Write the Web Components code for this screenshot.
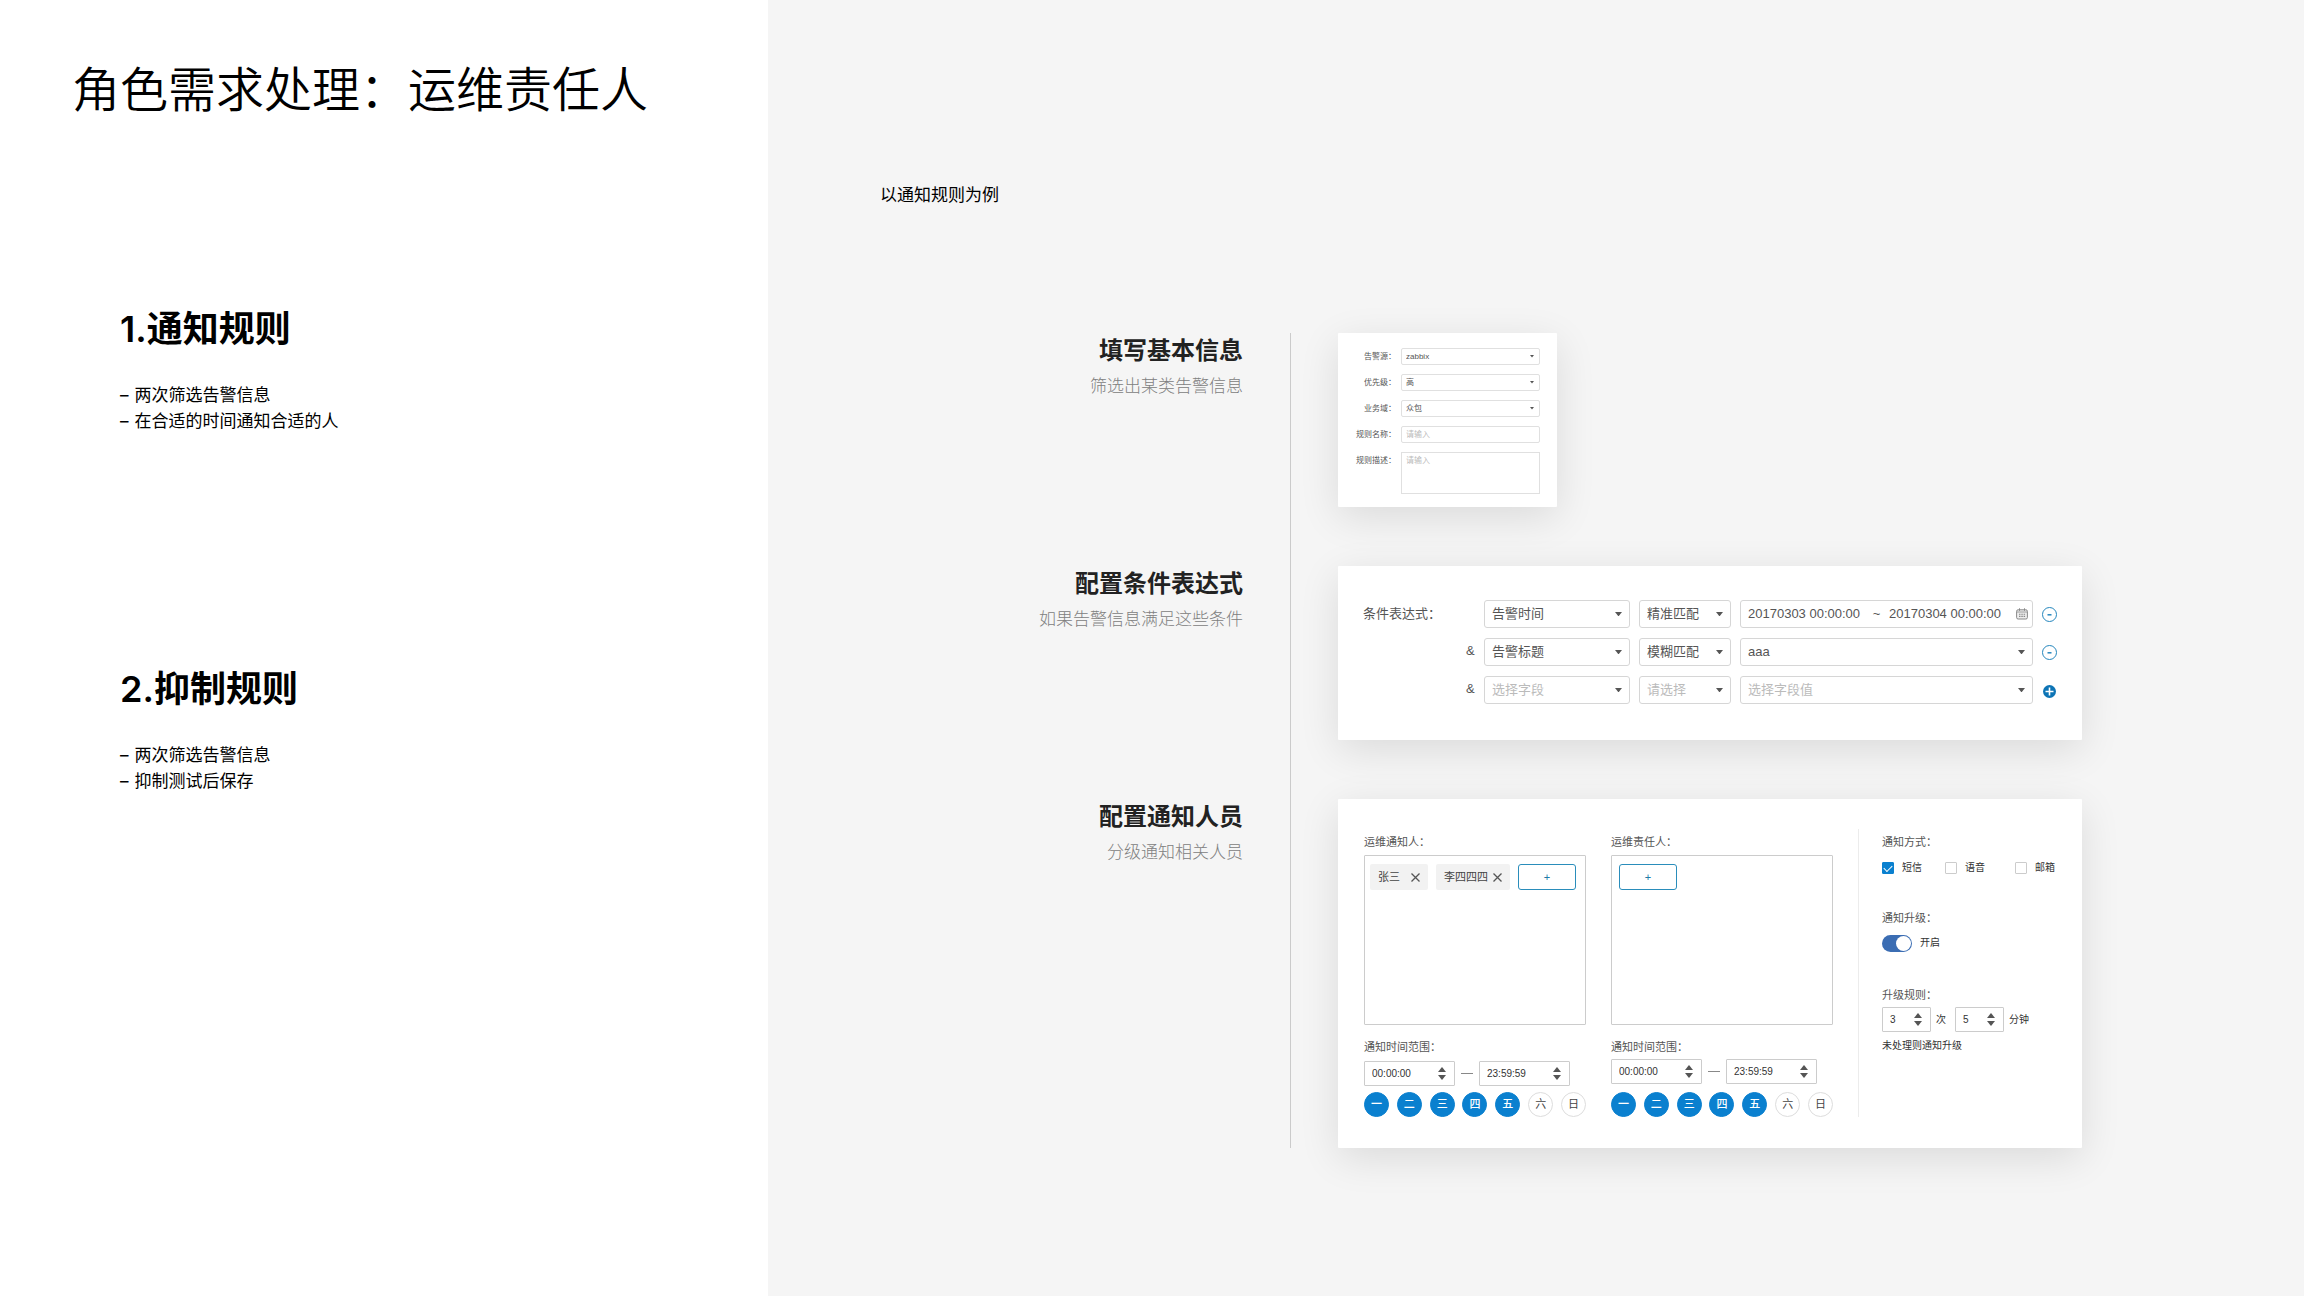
<!DOCTYPE html>
<html lang="zh-CN">
<head>
<meta charset="utf-8">
<title>角色需求处理：运维责任人</title>
<style>
  html, body { margin: 0; }
  body {
    display: grid;
    grid-template-columns: minmax(0, 1fr) minmax(0, 2fr);
    min-height: 100vh;
    background: #f5f5f5;
    color: #000;
    font-family: Inter, "Noto Sans CJK SC", sans-serif;
    --ui-font: "Liberation Sans", "Noto Sans CJK SC", sans-serif;
    --blue: #0a80cf;
  }
</style>
</head>
<body>
<brief-panel>
  <span slot="title">角色需求处理：运维责任人</span>
  <rule-summary heading="1.通知规则" points="两次筛选告警信息|在合适的时间通知合适的人"></rule-summary>
  <rule-summary heading="2.抑制规则" points="两次筛选告警信息|抑制测试后保存"></rule-summary>
</brief-panel>
<demo-panel>
  <span slot="caption">以通知规则为例</span>
  <flow-step heading="填写基本信息" note="筛选出某类告警信息">
    <basic-form></basic-form>
  </flow-step>
  <flow-step heading="配置条件表达式" note="如果告警信息满足这些条件">
    <condition-form></condition-form>
  </flow-step>
  <flow-step heading="配置通知人员" note="分级通知相关人员">
    <people-form></people-form>
  </flow-step>
</demo-panel>

<script>
const base = `:host, *, ::before { box-sizing: border-box; } input, select, textarea, button { font: inherit; color: inherit; margin: 0; padding: 0; border: 0; background: none; border-radius: 0; outline-offset: 1px; }`;

function define(name, render, wire) {
  customElements.define(name, class extends HTMLElement {
    connectedCallback() {
      if (this.shadowRoot) return;
      const root = this.attachShadow({ mode: "open" });
      const tpl = document.createElement("template");
      const attr = (key, fallback = "") => this.getAttribute(key) ?? fallback;
      tpl.innerHTML = `<style>${base}</style>` + render(attr, this);
      root.append(tpl.content.cloneNode(true));
      if (wire) wire(root, this);
    }
  });
}

const caret = `<svg viewBox="0 0 8 5" aria-hidden="true"><path d="M0 0h8L4 5z" fill="currentColor"/></svg>`;

/* Left column: page title and rule summaries */
define("brief-panel", () => `
  <style>
    :host { display: block; background: #fff; padding: 54px 24px 48px 72px; }
    h1 { margin: 0 0 187px; font: 350 48px/64px "Noto Sans CJK SC", sans-serif; }
    .rules { display: flex; flex-direction: column; gap: 231px; padding-left: 48px; }
  </style>
  <h1><slot name="title"></slot></h1>
  <div class="rules"><slot></slot></div>`);

define("rule-summary", attr => `
  <style>
    :host { display: block; }
    h2 { margin: 0 0 29px; font-size: 36px; line-height: 48px; font-weight: 600; }
    ul { margin: 0; padding: 0; list-style: none; font-size: 17px; line-height: 26px; }
    li { display: flex; gap: 6px; }
  </style>
  <h2>${attr("heading")}</h2>
  <ul>${attr("points").split("|").map(p => `<li><span>–</span><span>${p}</span></li>`).join("")}</ul>`);

/* Right column: caption and the step-by-step flow */
define("demo-panel", () => `
  <style>
    :host { display: block; padding: 182px 222px 48px 0; }
    p { margin: 0 0 125px 112px; font-size: 17px; line-height: 26px; }
    .flow { display: grid; grid-template-columns: minmax(0, 1fr) 1px 744px; column-gap: 47px; row-gap: 59px; }
    .line { grid-column: 2; grid-row: 1 / span 3; background: #cbcbcb; }
  </style>
  <p><slot name="caption"></slot></p>
  <div class="flow"><div class="line"></div><slot></slot></div>`);

define("flow-step", attr => `
  <style>
    :host { display: contents; }
    header { grid-column: 1; text-align: right; }
    h3 { margin: 0; font-size: 24px; line-height: 36px; font-weight: 600; color: #222; }
    p { margin: 4px 0 0; font-size: 17px; line-height: 26px; font-weight: 300; color: #808080; }
    .card { grid-column: 3; justify-self: start; max-width: 100%; background: #fff; border-radius: 1px; box-shadow: 0 10px 40px rgba(0,0,0,.11); font-family: var(--ui-font); color: #555; }
    .card.full { width: 100%; }
  </style>
  <header><h3>${attr("heading")}</h3><p>${attr("note")}</p></header>
  <div class="card"><slot></slot></div>`,
  (root, host) => {
    if (!host.querySelector("basic-form")) root.querySelector(".card").classList.add("full");
  });

/* Label and control on one row of the small form */
define("form-row", attr => {
  const kind = attr("kind"), value = attr("value");
  const control = kind === "select"
    ? `<span class="pick"><select id="c"><option>${value}</option></select>${caret}</span>`
    : kind === "area" ? `<textarea id="c" placeholder="${value}"></textarea>`
    : `<input id="c" type="text" placeholder="${value}">`;
  return `
  <style>
    :host { display: grid; grid-template-columns: 40px 139px; column-gap: 5px; font-size: 8px; line-height: 17px; }
    label { text-align: right; }
    .pick { display: grid; align-items: center; }
    .pick > * { grid-area: 1 / 1; }
    select, input, textarea { width: 100%; height: 17px; line-height: 15px; padding: 0 4px; border: 1px solid #e0e0e0; border-radius: 2px; appearance: none; display: block; }
    textarea { height: 42px; line-height: 16px; border-radius: 0; resize: none; }
    ::placeholder { color: #bbb; opacity: 1; }
    svg { width: 4px; justify-self: end; margin-right: 6px; pointer-events: none; }
  </style>
  <label for="c">${attr("label")}：</label>${control}`;
});

define("basic-form", () => `
  <style>
    :host { display: flex; flex-direction: column; gap: 9px; padding: 15px 17px 13px 18px; }
  </style>
  <form-row kind="select" label="告警源" value="zabbix"></form-row>
  <form-row kind="select" label="优先级" value="高"></form-row>
  <form-row kind="select" label="业务域" value="众包"></form-row>
  <form-row kind="text" label="规则名称" value="请输入"></form-row>
  <form-row kind="area" label="规则描述" value="请输入"></form-row>`);

define("drop-down", (attr, host) => `
  <style>
    :host { display: grid; align-items: center; font-size: 13px; }
    select, svg { grid-area: 1 / 1; }
    select { width: 100%; height: 28px; line-height: 26px; padding: 0 7px; border: 1px solid #d6d6d6; border-radius: 3px; appearance: none; color: ${host.hasAttribute("empty") ? "#bbb" : "#555"}; }
    svg { width: 7px; justify-self: end; margin-right: 8px; pointer-events: none; }
  </style>
  <select aria-label="${attr("label")}"><option>${attr("value")}</option></select>${caret}`);

define("date-range", attr => `
  <style>
    :host { display: flex; align-items: center; height: 28px; padding: 0 4px 0 7px; border: 1px solid #d6d6d6; border-radius: 3px; font-size: 13px; line-height: 26px; }
    input { width: 116px; }
    span { width: 25px; text-align: center; }
    button { display: flex; margin-left: auto; color: #888; }
    svg { width: 12px; height: 12px; }
  </style>
  <input type="text" aria-label="开始时间" value="${attr("from")}"><span>~</span>
  <input type="text" aria-label="结束时间" value="${attr("to")}">
  <button type="button" aria-label="日历"><svg viewBox="0 0 12 12" fill="none" stroke="currentColor"><rect x=".6" y="1.8" width="10.8" height="9.2" rx="1.5" fill="#eee"/><path d="M3.5 .3v2.5M8.5 .3v2.5"/><path d="M1 4h10" stroke-width=".8"/><path d="M3 6.2h1.5M5.3 6.2h1.5M7.6 6.2h1.5M3 8.4h1.5M5.3 8.4h1.5M7.6 8.4h1.5" stroke-width="1.1"/></svg></button>`);

const removeIcon = `<svg viewBox="0 0 15 15" fill="none" stroke="#2586bd"><circle cx="7.5" cy="7.5" r="7"/><path d="M5.5 7.8h4" stroke-width="1.5"/></svg>`;

define("condition-form", () => `
  <style>
    :host { display: grid; grid-template-columns: 94px 9px 146px 92px minmax(0, 1fr) 15px; column-gap: 9px; row-gap: 10px; align-items: center; padding: 34px 25px 36px; font-size: 13px; line-height: 28px; }
    .name { grid-column: 1 / span 2; }
    .and { grid-column: 2; line-height: 26px; align-self: start; }
    button { display: flex; align-items: center; height: 28px; }
    svg { width: 15px; height: 15px; }
  </style>
  <span class="name">条件表达式：</span>
  <drop-down label="字段" value="告警时间"></drop-down>
  <drop-down label="匹配方式" value="精准匹配"></drop-down>
  <date-range from="20170303 00:00:00" to="20170304 00:00:00"></date-range>
  <button type="button" aria-label="删除">${removeIcon}</button>
  <span class="and">&amp;</span>
  <drop-down label="字段" value="告警标题"></drop-down>
  <drop-down label="匹配方式" value="模糊匹配"></drop-down>
  <drop-down label="字段值" value="aaa"></drop-down>
  <button type="button" aria-label="删除">${removeIcon}</button>
  <span class="and">&amp;</span>
  <drop-down empty label="字段" value="选择字段"></drop-down>
  <drop-down empty label="匹配方式" value="请选择"></drop-down>
  <drop-down empty label="字段值" value="选择字段值"></drop-down>
  <button type="button" aria-label="添加"><svg viewBox="0 0 15 15"><circle cx="7.5" cy="8.5" r="6.5" fill="#0d74b5"/><path d="M7.5 4.5v8M3.5 8.5h8" stroke="#fff" stroke-width="1.6"/></svg></button>`);

/* Number or time box with its up and down arrows */
define("step-input", attr => `
  <style>
    :host { display: flex; align-items: center; width: 91px; height: 25px; padding: 0 8px 0 7px; border: 1px solid #ccc; border-radius: 1px; font-size: 10px; line-height: 23px; color: #333; }
    :host([small]) { width: 49px; }
    input { flex: 1; min-width: 0; width: 0; }
    .arrows { display: flex; flex-direction: column; gap: 3px; color: #555; }
    button { display: flex; }
    svg { width: 8px; height: 5px; }
    button:first-child svg { transform: rotate(180deg); }
  </style>
  <input type="text" aria-label="${attr("label")}" value="${attr("value")}">
  <span class="arrows"><button type="button" aria-label="增加">${caret}</button><button type="button" aria-label="减少">${caret}</button></span>`);

define("person-tag", () => `
  <style>
    :host { display: flex; align-items: center; justify-content: space-between; gap: 5px; min-width: 58px; height: 26px; padding: 0 8px; background: #f2f2f2; border-radius: 2px; font-size: 11px; color: #444; }
    button { display: flex; }
    svg { width: 9px; height: 9px; }
  </style>
  <slot></slot><button type="button" aria-label="移除"><svg viewBox="0 0 9 9" stroke="#555" stroke-width="1.3"><path d="M.5 .5l8 8M8.5 .5l-8 8"/></svg></button>`);

define("week-days", () => `
  <style>
    :host { display: flex; justify-content: space-between; }
    button { width: 25px; height: 25px; border-radius: 50%; border: 1px solid #ddd; font-size: 11px; line-height: 23px; text-align: center; color: #444; }
    button[aria-pressed="true"] { background: var(--blue); border-color: var(--blue); color: #fff; font-weight: 500; }
  </style>
  ${[..."一二三四五六日"].map((d, i) => `<button type="button" aria-pressed="${i < 5}">${d}</button>`).join("")}`,
  root => root.addEventListener("click", e => {
    const b = e.target.closest("button");
    if (b) b.setAttribute("aria-pressed", b.getAttribute("aria-pressed") !== "true");
  }));

define("notify-group", attr => `
  <style>
    :host { display: flex; flex-direction: column; width: 222px; font-size: 11px; line-height: 16px; }
    .box { display: flex; flex-wrap: wrap; align-content: start; gap: 8px; height: 170px; margin: 5px 0 14px; padding: 8px 7px 8px var(--inset, 5px); border: 1px solid #ccc; border-radius: 1px; }
    .add { width: 58px; height: 26px; border: 1px solid #2a8dbb; border-radius: 3px; color: #2079a8; }
    .range { display: flex; align-items: center; gap: 6px; margin: var(--range-gap, 6px) 0; }
    .dash { width: 12px; height: 1px; background: #888; }
    week-days { margin-top: auto; }
  </style>
  <span>${attr("label")}：</span>
  <div class="box"><slot></slot><button class="add" type="button" aria-label="添加人员">+</button></div>
  <span>通知时间范围：</span>
  <div class="range"><step-input label="开始" value="00:00:00"></step-input><span class="dash"></span><step-input label="结束" value="23:59:59"></step-input></div>
  <week-days></week-days>`);

define("tick-option", (attr, host) => `
  <style>
    :host { display: block; }
    label { display: flex; align-items: center; gap: 8px; }
    input { appearance: none; display: grid; place-items: center; width: 12px; height: 12px; border: 1px solid #ccc; border-radius: 1px; }
    input:checked { background: var(--blue); border-color: var(--blue); }
    input:checked::before { content: ""; width: 8px; height: 5px; margin-bottom: 2px; border: solid #fff; border-width: 0 0 1px 1px; transform: rotate(-45deg); }
  </style>
  <label><input type="checkbox" ${host.hasAttribute("checked") ? "checked" : ""}><span><slot></slot></span></label>`);

define("notify-options", () => `
  <style>
    :host { display: flex; flex-direction: column; flex: 1; min-width: 0; border-left: 1px solid #ececec; padding: 5px 0 0 23px; font-size: 10px; line-height: 16px; color: #333; }
    h4 { margin: 0; font-size: 11px; line-height: 16px; font-weight: 400; color: #555; }
    .ways { display: flex; gap: 23px; margin: 10px 0 34px; }
    .ways .last { margin-left: auto; }
    .toggle { display: flex; align-items: center; gap: 8px; height: 18px; margin: 8px 0 35px; }
    .toggle input { appearance: none; width: 30px; height: 17px; padding: 1px; border-radius: 9px; background: #b5b5b5; display: flex; }
    .toggle input::before { content: ""; width: 15px; height: 15px; border-radius: 50%; background: #fff; }
    .toggle input:checked { background: #3b6db3; justify-content: flex-end; }
    .rule { display: flex; align-items: center; gap: 5px; margin: 4px 0 6px; }
    .rule .gap { margin-right: 4px; }
  </style>
  <h4>通知方式：</h4>
  <div class="ways"><tick-option checked>短信</tick-option><tick-option>语音</tick-option><tick-option class="last">邮箱</tick-option></div>
  <h4>通知升级：</h4>
  <label class="toggle"><input type="checkbox" role="switch" checked>开启</label>
  <h4>升级规则：</h4>
  <div class="rule"><step-input small label="次数" value="3"></step-input><span class="gap">次</span><step-input small label="分钟数" value="5"></step-input><span>分钟</span></div>
  <span>未处理则通知升级</span>`);

define("people-form", () => `
  <style>
    :host { display: flex; gap: 25px; padding: 30px 27px 31px 26px; min-height: 349px; }
    notify-group { padding-top: 5px; }
    .duty { --inset: 7px; --range-gap: 4px; }
  </style>
  <notify-group label="运维通知人"><person-tag>张三</person-tag><person-tag>李四四四</person-tag></notify-group>
  <notify-group class="duty" label="运维责任人"></notify-group>
  <notify-options></notify-options>`);
</script>
</body>
</html>
